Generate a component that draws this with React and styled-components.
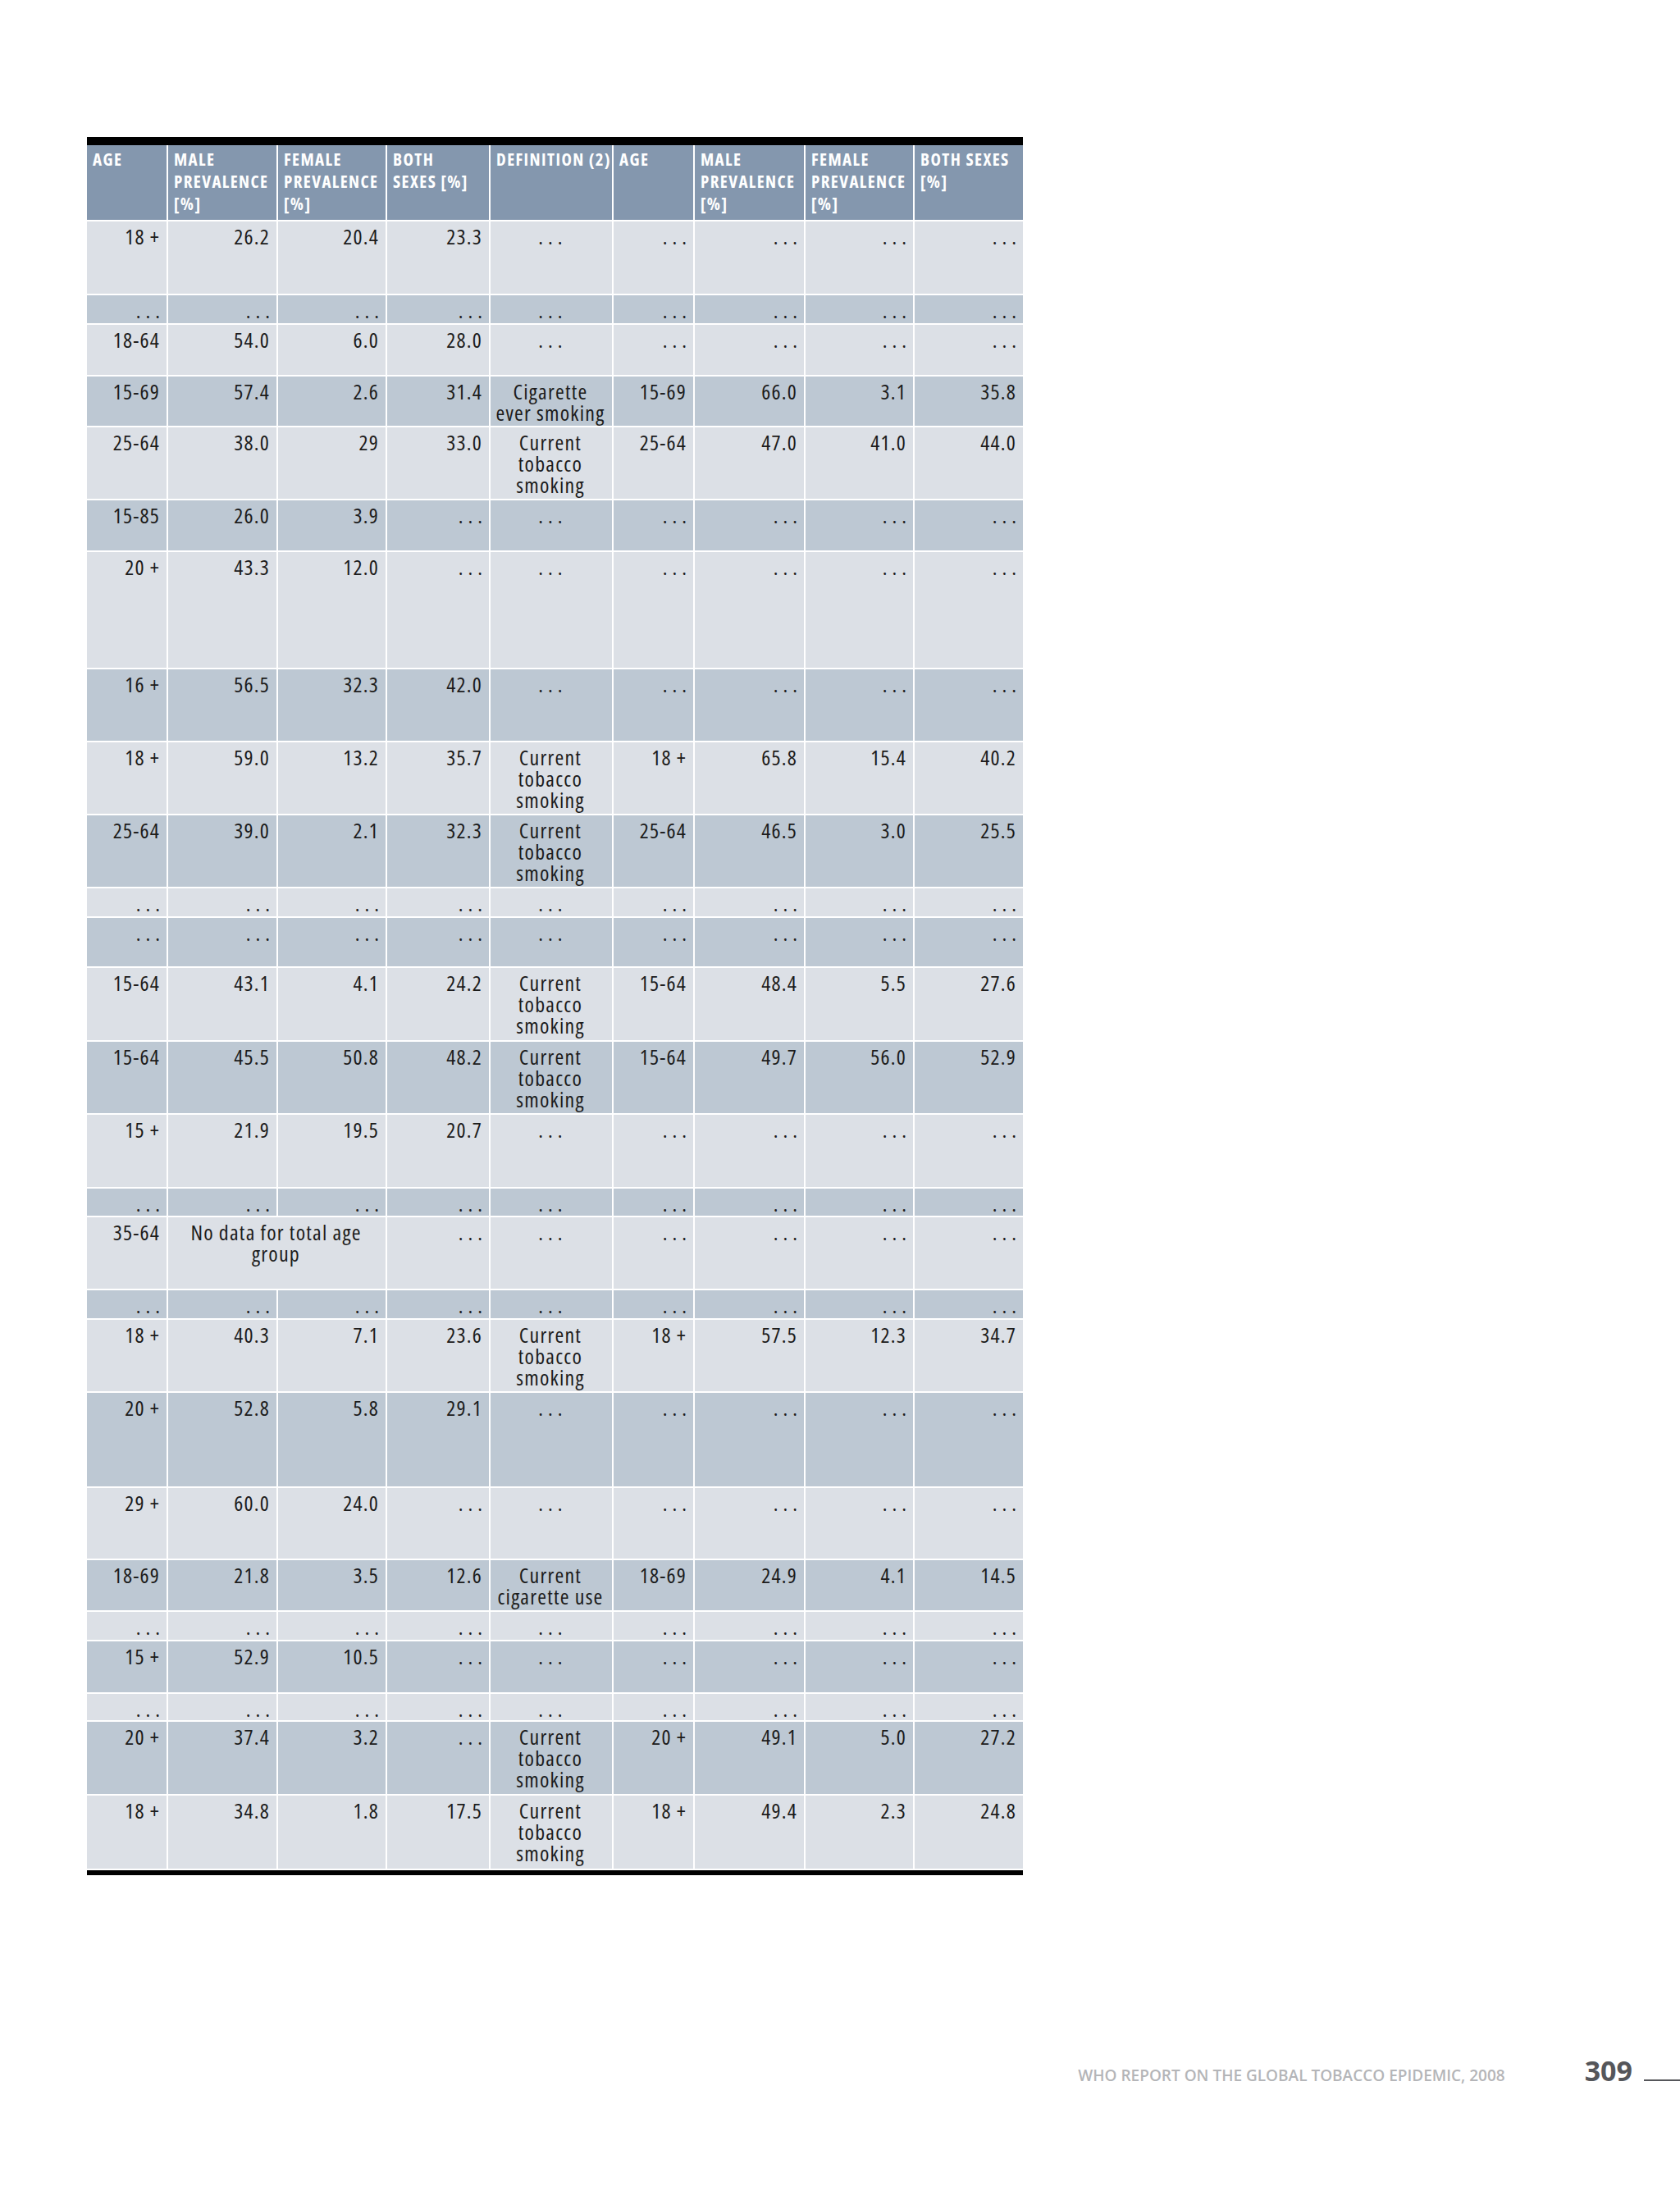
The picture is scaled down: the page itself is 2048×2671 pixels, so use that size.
import React from "react";
import styled, { createGlobalStyle } from "styled-components";

const FONT = `"Open Sans", "DejaVu Sans Condensed", sans-serif`;

const GlobalStyle = createGlobalStyle`
  html, body {
    margin: 0;
    padding: 0;
    background: #fff;
  }
  body {
    font-family: ${FONT};
    font-stretch: 75%;
    color: #1c1c1c;
  }
`;

const Page = styled.div`
  width: 2048px;
  min-height: 2671px;
  box-sizing: border-box;
  padding: 167px 0 0 106px;
  display: flex;
  flex-direction: column;
`;

const Table = styled.div`
  width: 1141px;
  display: flex;
  flex-direction: column;
  gap: 2px;
  background: #fff;
  border-top: 10px solid #000;
  border-bottom: 6px solid #000;
  padding-bottom: 2px;
`;

const COLS = "97px 132px 131px 124px 148px 97px 133px 131px 132px";

const Row = styled.div`
  display: grid;
  grid-template-columns: ${COLS};
  column-gap: 2px;
  height: ${p => p.$h}px;
`;

const HeadCell = styled.div`
  background: #8497ae;
  color: #fff;
  font-weight: 700;
  font-size: 21px;
  line-height: 27px;
  letter-spacing: 1.4px;
  text-transform: uppercase;
  white-space: nowrap;
  padding: 4px 0 0 7px;
`;

const Cell = styled.div`
  background: ${p => (p.$dark ? "#bdc8d3" : "#dce0e6")};
  font-size: 26px;
  line-height: 26px;
  letter-spacing: 1.2px;
  padding: 5px 8px 0 6px;
  text-align: ${p => p.$align || "right"};
  grid-column: span ${p => p.$span || 1};
  white-space: nowrap;
`;

const Dots = styled.span`
  letter-spacing: 6px;
  margin-right: -6px;
`;

const Footer = styled.div`
  display: flex;
  justify-content: flex-end;
  align-items: baseline;
  margin-top: 221px;
  font-stretch: 100%;
`;

const Source = styled.span`
  font-size: 19px;
  font-weight: 600;
  color: #b4b5b8;
  text-transform: uppercase;
`;

const PageNum = styled.span`
  font-size: 34px;
  line-height: 34px;
  font-weight: 700;
  color: #55565a;
  margin-left: 97px;
`;

const Rule = styled.div`
  width: 44px;
  height: 2px;
  background: #55565a;
  margin-left: 14px;
`;

const D = null;

const header = [
  ["AGE"],
  ["MALE", "PREVALENCE", "[%]"],
  ["FEMALE", "PREVALENCE", "[%]"],
  ["BOTH", "SEXES [%]"],
  ["DEFINITION (2)"],
  ["AGE"],
  ["MALE", "PREVALENCE", "[%]"],
  ["FEMALE", "PREVALENCE", "[%]"],
  ["BOTH SEXES", "[%]"],
];

const CTS = ["Current", "tobacco", "smoking"];

const rows = [
  { h: 88, c: ["18 +", "26.2", "20.4", "23.3", D, D, D, D, D] },
  { h: 34, c: [D, D, D, D, D, D, D, D, D] },
  { h: 61, c: ["18-64", "54.0", "6.0", "28.0", D, D, D, D, D] },
  { h: 60, c: ["15-69", "57.4", "2.6", "31.4", ["Cigarette", "ever smoking"], "15-69", "66.0", "3.1", "35.8"] },
  { h: 87, c: ["25-64", "38.0", "29", "33.0", CTS, "25-64", "47.0", "41.0", "44.0"] },
  { h: 61, c: ["15-85", "26.0", "3.9", D, D, D, D, D, D] },
  { h: 141, c: ["20 +", "43.3", "12.0", D, D, D, D, D, D] },
  { h: 87, c: ["16 +", "56.5", "32.3", "42.0", D, D, D, D, D] },
  { h: 87, c: ["18 +", "59.0", "13.2", "35.7", CTS, "18 +", "65.8", "15.4", "40.2"] },
  { h: 87, c: ["25-64", "39.0", "2.1", "32.3", CTS, "25-64", "46.5", "3.0", "25.5"] },
  { h: 34, c: [D, D, D, D, D, D, D, D, D] },
  { h: 59, c: [D, D, D, D, D, D, D, D, D] },
  { h: 88, c: ["15-64", "43.1", "4.1", "24.2", CTS, "15-64", "48.4", "5.5", "27.6"] },
  { h: 87, c: ["15-64", "45.5", "50.8", "48.2", CTS, "15-64", "49.7", "56.0", "52.9"] },
  { h: 88, c: ["15 +", "21.9", "19.5", "20.7", D, D, D, D, D] },
  { h: 33, c: [D, D, D, D, D, D, D, D, D] },
  { h: 87, c: ["35-64", { span: 2, lines: ["No data for total age", "group"] }, D, D, D, D, D, D] },
  { h: 34, c: [D, D, D, D, D, D, D, D, D] },
  { h: 87, c: ["18 +", "40.3", "7.1", "23.6", CTS, "18 +", "57.5", "12.3", "34.7"] },
  { h: 114, c: ["20 +", "52.8", "5.8", "29.1", D, D, D, D, D] },
  { h: 86, c: ["29 +", "60.0", "24.0", D, D, D, D, D, D] },
  { h: 61, c: ["18-69", "21.8", "3.5", "12.6", ["Current", "cigarette use"], "18-69", "24.9", "4.1", "14.5"] },
  { h: 34, c: [D, D, D, D, D, D, D, D, D] },
  { h: 62, c: ["15 +", "52.9", "10.5", D, D, D, D, D, D] },
  { h: 32, c: [D, D, D, D, D, D, D, D, D] },
  { h: 88, c: ["20 +", "37.4", "3.2", D, CTS, "20 +", "49.1", "5.0", "27.2"] },
  { h: 89, c: ["18 +", "34.8", "1.8", "17.5", CTS, "18 +", "49.4", "2.3", "24.8"] },
];

const Lines = ({ lines }) =>
  lines.map((l, i) => (
    <React.Fragment key={i}>
      {i > 0 && <br />}
      {l}
    </React.Fragment>
  ));

const renderCell = (value, col, dark) => {
  const center = col === 4;
  if (value === null) {
    return (
      <Cell key={col} $dark={dark} $align={center ? "center" : "right"}>
        <Dots>...</Dots>
      </Cell>
    );
  }
  if (Array.isArray(value)) {
    return (
      <Cell key={col} $dark={dark} $align="center">
        <Lines lines={value} />
      </Cell>
    );
  }
  if (typeof value === "object") {
    return (
      <Cell key={col} $dark={dark} $align="center" $span={value.span}>
        <Lines lines={value.lines} />
      </Cell>
    );
  }
  return (
    <Cell key={col} $dark={dark}>
      {value}
    </Cell>
  );
};

const App = () => {
  return (
    <>
      <GlobalStyle />
      <Page>
        <Table>
          <Row $h={91}>
            {header.map((h, i) => (
              <HeadCell key={i}>
                <Lines lines={h} />
              </HeadCell>
            ))}
          </Row>
          {rows.map((row, r) => {
            const dark = r % 2 === 1;
            const cells = [];
            let col = 0;
            row.c.forEach(v => {
              if (col > 8) return;
              cells.push(renderCell(v, col, dark));
              col += v && v.span ? v.span : 1;
            });
            return (
              <Row key={r} $h={row.h}>
                {cells}
              </Row>
            );
          })}
        </Table>
        <Footer>
          <Source>WHO Report on the Global Tobacco Epidemic, 2008</Source>
          <PageNum>309</PageNum>
          <Rule />
        </Footer>
      </Page>
    </>
  );
};

export default App;
